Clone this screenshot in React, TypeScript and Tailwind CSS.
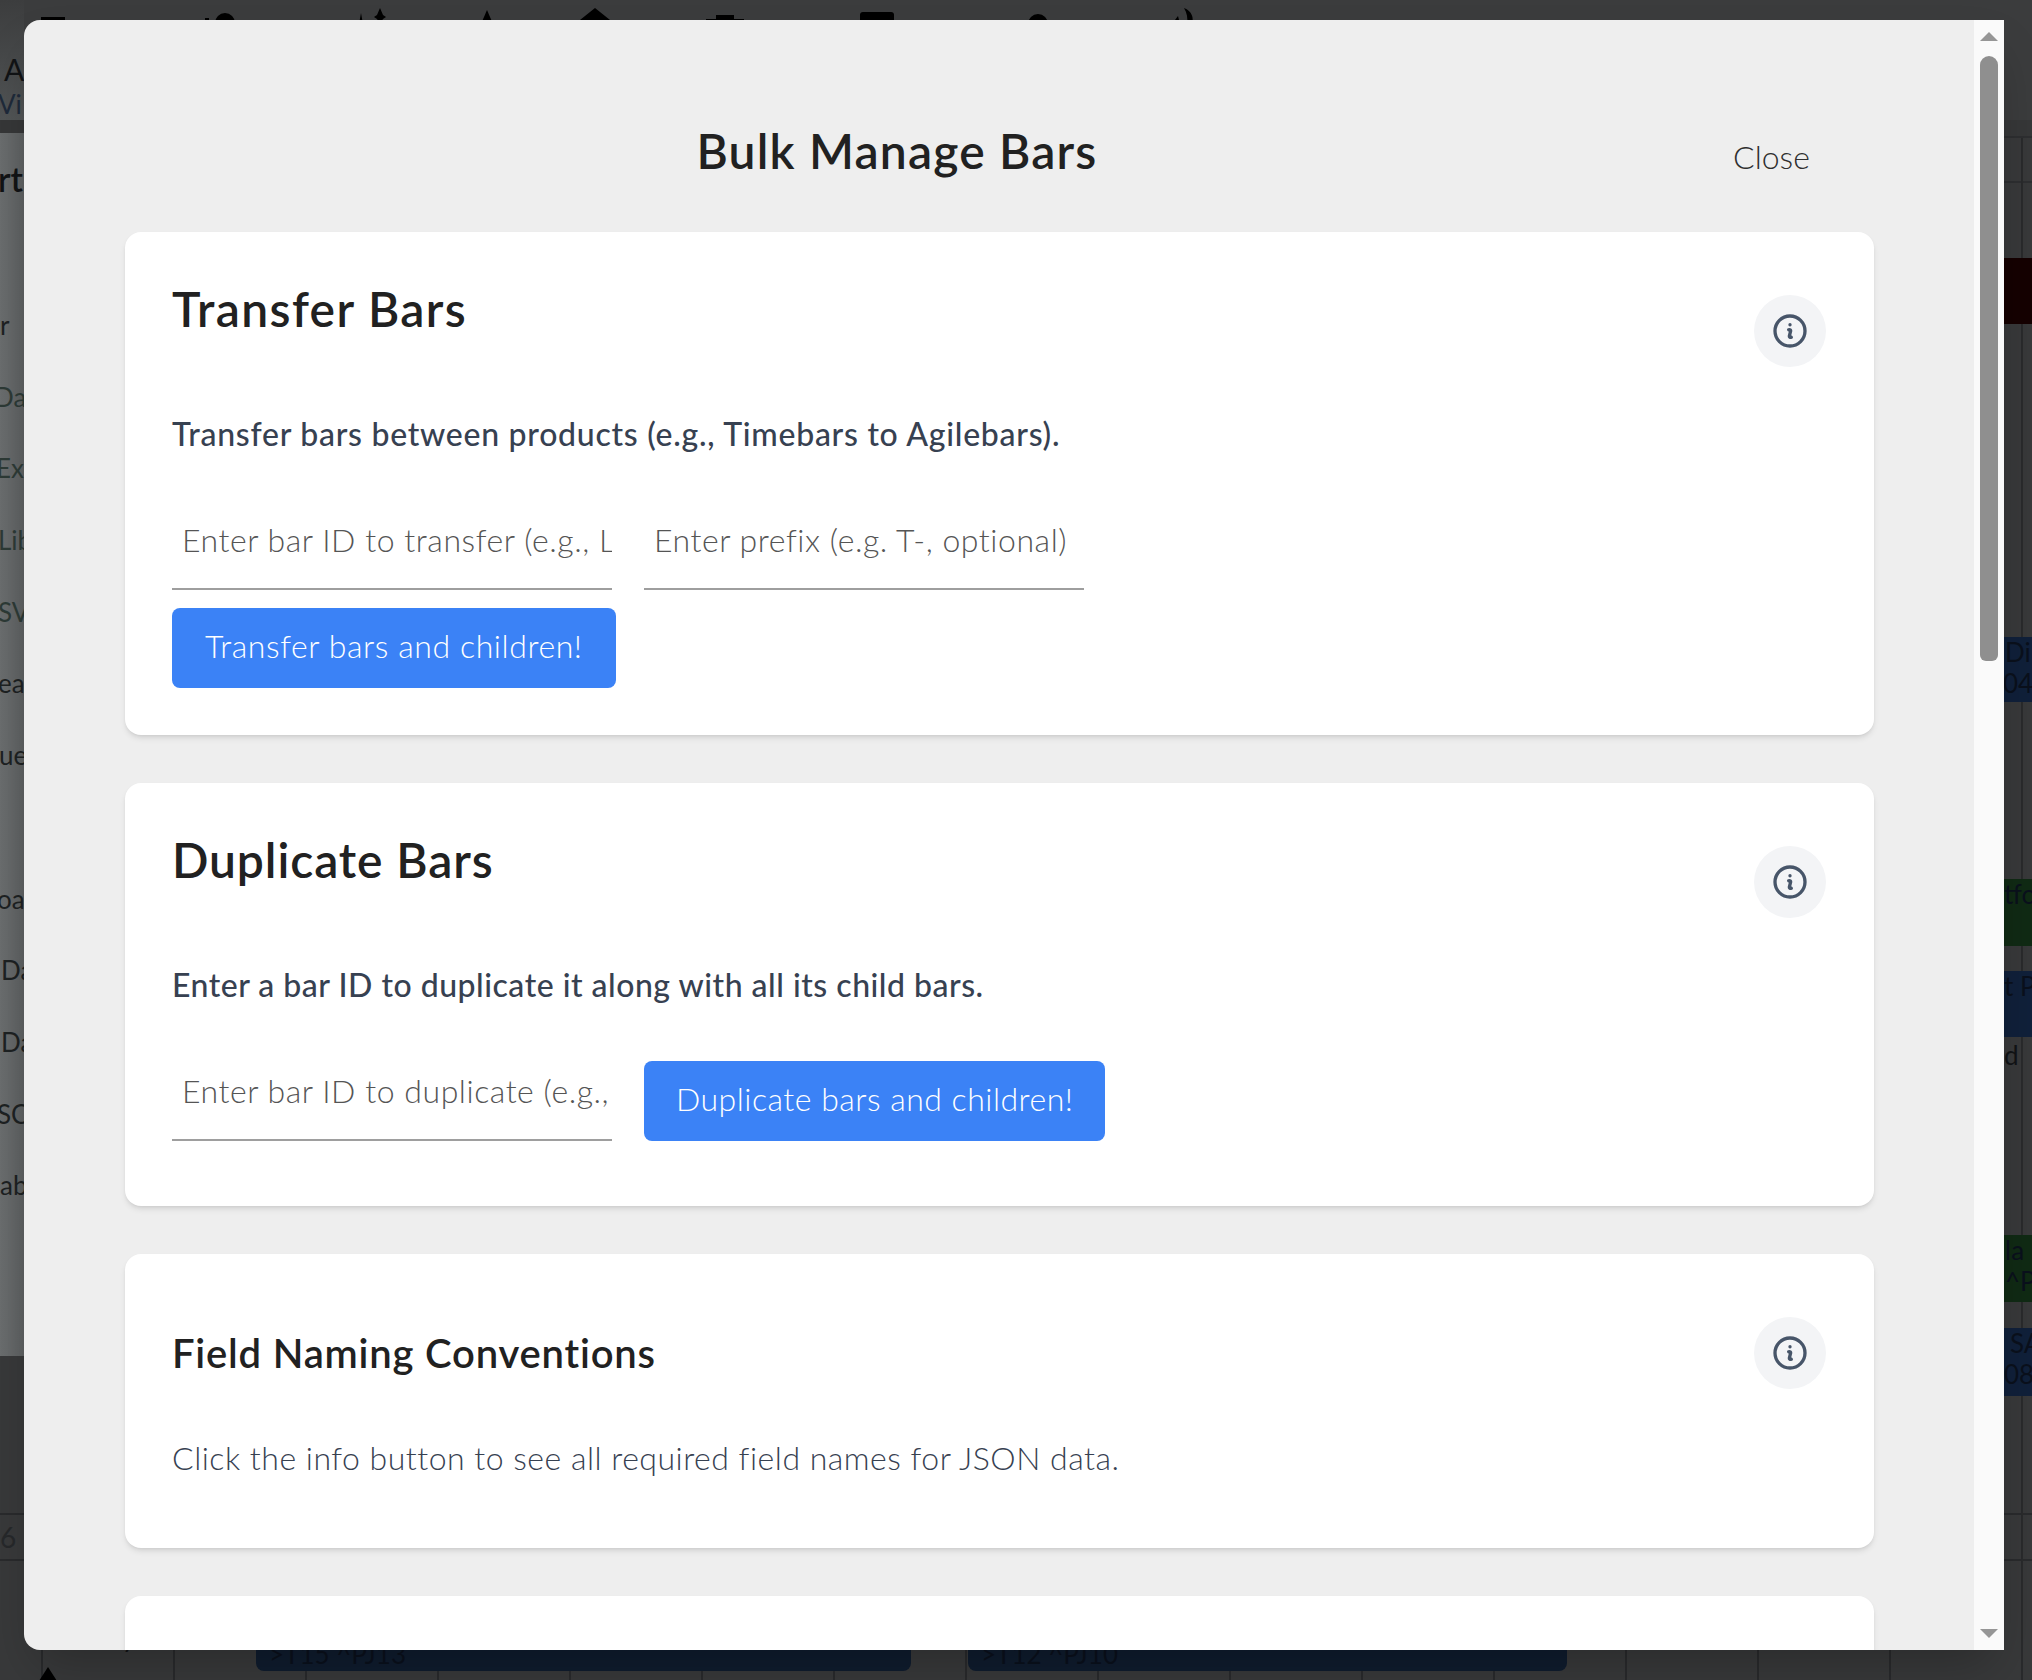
import type { ReactNode } from 'react'

const gridLines = Array.from({ length: 16 }, (_, i) => i)

const sideRows = [
  { text: 'r', cls: 'ml-0 text-[#1d2122]' },
  { text: 'Da', cls: '-ml-[6px] text-[#2d3a36]' },
  { text: 'Exe', cls: '-ml-[4px] text-[#2d3a36]' },
  { text: 'Lib', cls: '-ml-[2px] text-[#2d3a36]' },
  { text: 'SV', cls: '-ml-[2px] text-[#2d3a36]' },
  { text: 'ead', cls: '-ml-[2px] text-[#1d2122]' },
  { text: 'ue', cls: '-ml-[1px] text-[#1d2122]' },
  { text: '', cls: '' },
  { text: 'oar', cls: '-ml-[3px] text-[#1d2122]' },
  { text: 'Da', cls: 'ml-[1px] text-[#1d2122]' },
  { text: 'Da', cls: 'ml-[1px] text-[#1d2122]' },
  { text: 'SC', cls: '-ml-[3px] text-[#1d2122]' },
  { text: 'ab', cls: 'ml-0 text-[#1d2122]' },
]

function InfoButton() {
  return (
    <button className="mt-[15px] flex h-[72px] w-[72px] shrink-0 items-center justify-center rounded-full bg-[#f3f4f6]">
      <svg viewBox="0 0 24 24" fill="none" stroke="#475569" strokeWidth={2} strokeLinecap="round" strokeLinejoin="round" className="h-10 w-10">
        <path d="M11.25 11.25l.041-.02a.75.75 0 011.063.852l-.708 2.836a.75.75 0 001.063.853l.041-.021M21 12a9 9 0 11-18 0 9 9 0 0118 0zm-9-3.75h.008v.008H12V8.25z" />
      </svg>
    </button>
  )
}

function Card({ children, className = '' }: { children: ReactNode; className?: string }) {
  return (
    <section className={`flex w-[1749px] shrink-0 justify-between rounded-2xl bg-white py-12 pl-[47px] pr-12 shadow-md ${className}`}>
      <div className="min-w-0 flex-1">{children}</div>
      <InfoButton />
    </section>
  )
}

function BarInput({ placeholder }: { placeholder: string }) {
  return (
    <input
      placeholder={placeholder}
      className="h-[80px] w-[440px] border-b-2 border-[#9e9e9e] bg-transparent pb-[20px] pl-[10px] text-[32px] font-light tracking-[0.55px] outline-none placeholder:text-[#555555]"
    />
  )
}

function BlueButton({ children, className = '' }: { children: ReactNode; className?: string }) {
  return (
    <button className={`flex h-[80px] items-center whitespace-nowrap rounded-lg bg-[#3b82f6] pb-[4px] text-[32px] font-light text-white ${className}`}>
      {children}
    </button>
  )
}

function GanttBar({ className, children }: { className: string; children?: ReactNode }) {
  return <div className={`absolute overflow-hidden whitespace-nowrap text-[26px] leading-[31px] text-[#0a101c] ${className}`}>{children}</div>
}

function Backdrop() {
  return (
    <div className="absolute inset-0 overflow-hidden bg-[#38393a] font-['Lato',sans-serif]">
      <header className="relative h-[120px] bg-[#3b3c3d] pt-[52px] text-[#111315]">
        <div className="absolute left-0 top-0 h-[120px] w-[24px] bg-gradient-to-b from-[#3c3d3e] to-[#525556]" />
        <svg width="1300" height="24" viewBox="0 0 1300 24" className="absolute left-0 top-0" fill="#000000">
          <rect x="41" y="17" width="24" height="7" />
          <circle cx="225" cy="23" r="10" />
          <rect x="205" y="18" width="4" height="6" />
          <path d="M380 8l3 7 3 2-3 2-3 5-3-5-3-2 3-2zM361 13l2 11h-4z" />
          <path d="M487 10l6 14h-12z" />
          <path d="M595 8l20 16h-40z" />
          <rect x="716" y="15" width="18" height="9" />
          <rect x="706" y="19" width="38" height="5" />
          <rect x="860" y="12" width="34" height="12" rx="3" />
          <circle cx="1038" cy="24" r="10" />
          <path d="M1184 8c8 3 10 10 8 16h-5c1-6 0-11-3-16zM1175 20l3-4 2 8h-5z" />
        </svg>
        <div className="relative pl-[4px] text-[30px] leading-[34px]">A</div>
        <div className="relative -ml-[2px] pt-[2px] text-[26px] leading-[32px] text-[#1e2a3a]">Vi</div>
      </header>
      <div className="h-[18px] border-b-2 border-[#2d2e30] bg-[#363738]" />
      <div className="h-[45px] border-b-2 border-[#2d2e30]" />

      <div className="absolute inset-y-[138px] left-0 right-0 flex pl-[41px]">
        {gridLines.map((n) => (
          <div key={n} className="h-[1542px] w-[132px] shrink-0 border-l-2 border-[#292a2c]" />
        ))}
      </div>

      <div className="absolute left-0 top-[133px] h-[1223px] w-[24px] overflow-hidden whitespace-nowrap bg-gradient-to-r from-[#6b6e6f] to-[#5e6162] pt-[26px] text-[26px]">
        <div className="mb-[109px] -ml-[2px] h-[40px] text-[34px] font-semibold leading-[40px] text-[#111315]">rt</div>
        {sideRows.map((row, i) => (
          <div key={i} className={`h-[71.7px] leading-[34px] ${row.cls}`}>{row.text}</div>
        ))}
      </div>

      <div className="absolute left-0 right-0 top-[1513px] h-[48px] border-y-2 border-[#292a2c] text-[28px] leading-[44px] text-[#26282a]">6</div>

      <GanttBar className="left-[1990px] top-[258px] h-[66px] w-[60px] bg-[#150000]" />
      <GanttBar className="left-[1990px] top-[637px] h-[65px] w-[60px] bg-[#10203a] pl-[15px]">Di<br /><span className="-ml-[2px]">04</span></GanttBar>
      <GanttBar className="left-[1990px] top-[879px] h-[67px] w-[60px] bg-[#102a14] pl-[14px]">tfo</GanttBar>
      <GanttBar className="left-[1990px] top-[971px] h-[66px] w-[60px] bg-[#10203a] pl-[14px]">t P</GanttBar>
      <GanttBar className="left-[2004px] top-[1040px] h-[40px] w-[40px] text-[#111315]">d</GanttBar>
      <GanttBar className="left-[1990px] top-[1235px] h-[67px] w-[60px] bg-[#102a14] pl-[15px]">la<br />^P</GanttBar>
      <GanttBar className="left-[1990px] top-[1328px] h-[68px] w-[60px] bg-[#10203a] pl-[20px]">SA<br /><span className="-ml-[6px]">08</span></GanttBar>

      <GanttBar className="left-[256px] top-[1600px] h-[71px] w-[655px] rounded-lg bg-[#0f1c2e] pl-[13px] pt-[39px]">&gt;T15 ^PJ13</GanttBar>
      <GanttBar className="left-[968px] top-[1600px] h-[71px] w-[599px] rounded-lg bg-[#0f1c2e] pl-[13px] pt-[39px]">&gt;T12 ^PJ10</GanttBar>
      <GanttBar className="left-[122px] top-[1622px] h-[40px] w-[30px] text-[#111315]">y</GanttBar>

      <svg width="20" height="14" viewBox="0 0 20 14" className="absolute left-[38px] top-[1667px]" fill="#000000">
        <path d="M10 0l9 14H1z" />
      </svg>
    </div>
  )
}

function Scrollbar() {
  return (
    <div className="flex w-[30px] shrink-0 flex-col items-center bg-[#fafafa] pb-[12px] pt-[12px]">
      <svg width="18" height="9" viewBox="0 0 18 9" fill="#969696"><path d="M9 0l9 9H0z" /></svg>
      <div className="mt-[15px] h-[605px] w-[18px] rounded-t-[9px] rounded-b-[6px] bg-[#8f8f8f]" />
      <svg width="18" height="9" viewBox="0 0 18 9" fill="#969696" className="mt-auto"><path d="M0 0h18L9 9z" /></svg>
    </div>
  )
}

export default function App() {
  return (
    <div className="relative h-[1680px] w-full overflow-hidden">
      <Backdrop />
      <div className="absolute bottom-[30px] left-[24px] top-[20px] flex w-[1980px] overflow-hidden rounded-l-2xl bg-[#eeeeee] font-['Lato',sans-serif] shadow-2xl">
        <div className="min-w-0 flex-1 overflow-hidden pl-[101px]">
          <div className="flex h-[212px] w-[1749px] shrink-0">
            <h1 className="h-fit flex-1 pt-[96px] text-center text-[48px] font-semibold leading-[70px] tracking-[1.2px] text-[#212121]">Bulk Manage Bars</h1>
            <button className="h-fit w-[205px] pt-[109px] text-center text-[32px] font-light leading-[56px] text-[#2f2f2f]">Close</button>
          </div>
          <div className="flex flex-col gap-12">
            <Card>
              <h2 className="text-[48px] font-semibold leading-[58px] tracking-[1.4px] text-[#212121]">Transfer Bars</h2>
              <p className="mt-[74px] text-[32px] font-medium leading-[44px] tracking-[0.73px] text-[#374151]">Transfer bars between products (e.g., Timebars to Agilebars).</p>
              <div className="mt-[54px] flex gap-[32px]">
                <BarInput placeholder="Enter bar ID to transfer (e.g., LT1)" />
                <BarInput placeholder="Enter prefix (e.g. T-, optional)" />
              </div>
              <div className="-mb-[1px] mt-[18px]">
                <BlueButton className="px-[33px] tracking-[0.58px]">Transfer bars and children!</BlueButton>
              </div>
            </Card>
            <Card>
              <h2 className="text-[48px] font-semibold leading-[58px] tracking-[0.9px] text-[#212121]">Duplicate Bars</h2>
              <p className="mt-[74px] text-[32px] font-medium leading-[44px] tracking-[0.5px] text-[#374151]">Enter a bar ID to duplicate it along with all its child bars.</p>
              <div className="mb-[17px] mt-[54px] flex gap-[32px]">
                <BarInput placeholder="Enter bar ID to duplicate (e.g., LT1)" />
                <BlueButton className="px-[32px] tracking-[0.5px]">Duplicate bars and children!</BlueButton>
              </div>
            </Card>
            <Card>
              <h2 className="pt-[23px] text-[40px] font-semibold leading-[56px] tracking-[0.8px] text-[#212121]">Field Naming Conventions</h2>
              <p className="mb-[20px] mt-[55px] text-[32px] font-light leading-[44px] tracking-[0.5px] text-[#374151]">Click the info button to see all required field names for JSON data.</p>
            </Card>
            <Card className="h-[200px]">
              <span />
            </Card>
          </div>
        </div>
        <Scrollbar />
      </div>
    </div>
  )
}
